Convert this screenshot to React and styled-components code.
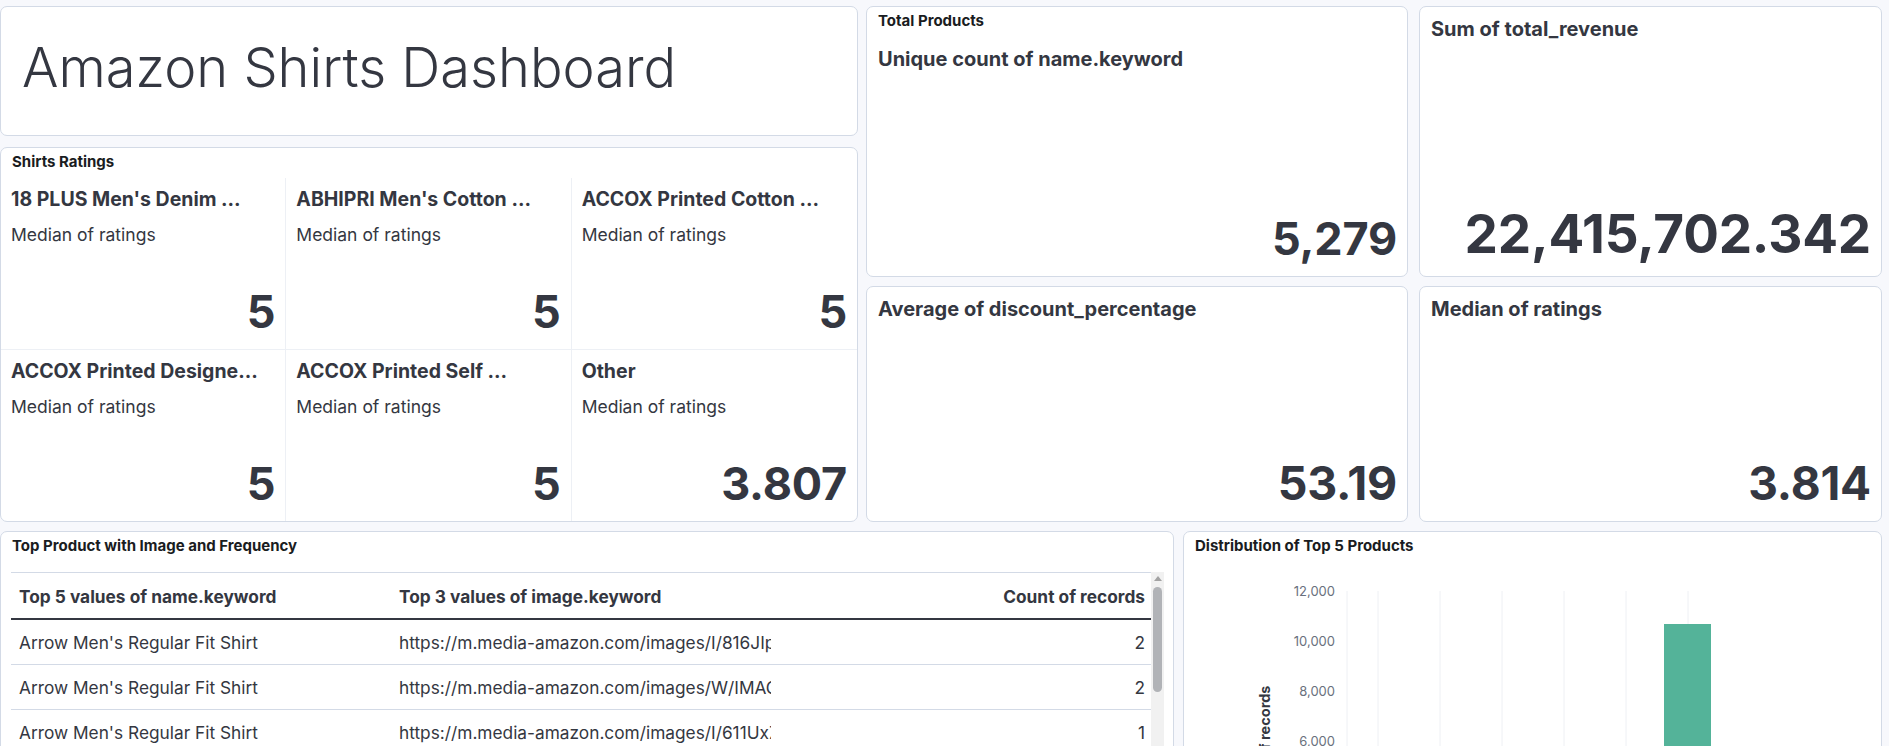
import React from "react";
import styled, { createGlobalStyle } from "styled-components";

const GlobalStyle = createGlobalStyle`
  html, body { margin: 0; padding: 0; background: #f7f8fc; overflow: hidden; }
  body { font-family: Inter, "Noto Sans", sans-serif; color: #343741; -webkit-font-smoothing: antialiased; }
  *, *::before, *::after { box-sizing: border-box; }
`;

const Page = styled.div`
  display: flex;
  flex-direction: column;
  gap: 9px;
  padding: 6px 7px 0 0;
  width: 1889px;
  height: 746px;
  overflow: hidden;
`;

const TopSection = styled.div`
  display: grid;
  grid-template-columns: 858px 1fr;
  column-gap: 8px;
`;

const LeftColumn = styled.div`
  display: flex;
  flex-direction: column;
  gap: 11px;
`;

const MetricGrid = styled.div`
  display: grid;
  grid-template-columns: 542px 463px;
  grid-template-rows: 271px 236px;
  column-gap: 11px;
  row-gap: 9px;
`;

const BottomSection = styled.div`
  display: grid;
  grid-template-columns: 1174px 699px;
  column-gap: 9px;
`;

const Panel = styled.section`
  background: #ffffff;
  border: 1px solid #d3dae6;
  border-radius: 7px;
  display: flex;
  flex-direction: column;
  overflow: hidden;
  min-width: 0;
  height: ${(p) => (p.$height ? `${p.$height}px` : "auto")};
`;

const PanelTitle = styled.h2`
  margin: 0;
  padding: 5px 11px 7px;
  font-size: 15px;
  line-height: 18px;
  font-weight: 700;
  color: #1a1c21;
  white-space: nowrap;
`;

const DashboardTitle = styled.h1`
  margin: 0;
  padding: 28px 21px 26px;
  font-size: 54.2px;
  line-height: 1.2;
  font-weight: 300;
  color: #343741;
  white-space: nowrap;
`;

const TileGrid = styled.div`
  flex: 1;
  display: grid;
  grid-template-columns: repeat(3, 1fr);
  grid-template-rows: repeat(2, 1fr);
`;

const Tile = styled.div`
  display: flex;
  flex-direction: column;
  min-width: 0;
  padding: 10px 10px 15px 10px;
  border-right: ${(p) => (p.$lastCol ? "none" : "1px solid #edf0f5")};
  border-bottom: ${(p) => (p.$lastRow ? "none" : "1px solid #edf0f5")};
`;

const MetricBody = styled.div`
  flex: 1;
  display: flex;
  flex-direction: column;
  min-height: 0;
  padding: 10px 10px 15px 11px;
`;

const MetricName = styled.div`
  font-size: ${(p) => p.$size || 19.5}px;
  line-height: 1.2;
  font-weight: 700;
  color: #343741;
  white-space: nowrap;
  overflow: hidden;
`;

const MetricSub = styled.div`
  margin-top: 13px;
  font-size: 17.5px;
  line-height: 1.2;
  font-weight: 400;
  color: #343741;
  white-space: nowrap;
`;

const MetricValue = styled.div`
  margin-top: auto;
  font-size: ${(p) => p.$size || 45}px;
  line-height: 1;
  font-weight: 700;
  color: #343741;
  text-align: right;
  white-space: nowrap;
  letter-spacing: -0.2px;
`;

const TableFrame = styled.div`
  display: flex;
  margin: 10px 9px 0 10px;
  min-height: 0;
  flex: 1;
`;

const TableScroller = styled.div`
  flex: 1;
  min-width: 0;
  border-top: 1px solid #d3dae6;
`;

const Table = styled.table`
  width: 100%;
  border-collapse: collapse;
  table-layout: fixed;
  font-size: 17.3px;
  color: #343741;
`;

const HeadCell = styled.th`
  padding: 11px ${(p) => (p.$align === "right" ? "6px" : "8px")} 9px 8px;
  height: 46px;
  font-weight: 700;
  line-height: 24px;
  text-align: ${(p) => p.$align || "left"};
  border-bottom: 2px solid #343741;
  white-space: nowrap;
  overflow: hidden;
`;

const Cell = styled.td`
  padding: 11px ${(p) => (p.$align === "right" ? "6px" : p.$clip ? "0" : "8px")} 9px 8px;
  height: 45px;
  font-weight: 400;
  line-height: 24px;
  text-align: ${(p) => p.$align || "left"};
  border-bottom: 1px solid #d3dae6;
  white-space: nowrap;
  overflow: hidden;
  text-overflow: clip;
`;

const ScrollTrack = styled.div`
  width: 13px;
  background: #f1f1f1;
  display: flex;
  flex-direction: column;
  align-items: center;
  padding-top: 4px;
  gap: 6px;
`;

const ScrollArrow = styled.div`
  width: 0;
  height: 0;
  border-left: 4px solid transparent;
  border-right: 4px solid transparent;
  border-bottom: 5px solid #a3a3a3;
`;

const ScrollThumb = styled.div`
  width: 9px;
  height: 105px;
  border-radius: 5px;
  background: #b1b3b7;
`;

const ChartArea = styled.div`
  flex: 1;
  min-height: 0;
`;

const tiles = [
  { name: "18 PLUS Men's Denim …", value: "5" },
  { name: "ABHIPRI Men's Cotton …", value: "5" },
  { name: "ACCOX Printed Cotton …", value: "5" },
  { name: "ACCOX Printed Designe…", value: "5" },
  { name: "ACCOX Printed Self …", value: "5" },
  { name: "Other", value: "3.807" },
];

const rows = [
  ["Arrow Men's Regular Fit Shirt", "https://m.media-amazon.com/images/I/816JIpQ2EfL._AC_UL320_.jpg", "2"],
  ["Arrow Men's Regular Fit Shirt", "https://m.media-amazon.com/images/W/IMAGERENDERING_521856-T1/images/I/71.jpg", "2"],
  ["Arrow Men's Regular Fit Shirt", "https://m.media-amazon.com/images/I/611UxZ3vLGL._AC_UL320_.jpg", "1"],
  ["Allen Solly Men's Slim Fit Shirt", "https://m.media-amazon.com/images/I/71kP0rY2FAL._AC_UL320_.jpg", "2"],
  ["Allen Solly Men's Slim Fit Shirt", "https://m.media-amazon.com/images/I/61bN7qYJzXL._AC_UL320_.jpg", "1"],
];

const yTicks = [12000, 10000, 8000, 6000, 4000, 2000, 0];
const gridXs = [163, 194, 256, 318, 380, 442, 504];

function BarChart() {
  const zeroY = 329;
  const perUnit = 25 / 1000;
  const barValue = 10680;
  const barTop = zeroY - barValue * perUnit;
  return (
    <svg width="697" height="380" viewBox="0 0 697 380">
      {gridXs.map((x) => (
        <line key={x} x1={x} x2={x} y1={29} y2={zeroY} stroke="#eef0f4" strokeWidth="1" />
      ))}
      {yTicks.map((t) => (
        <text
          key={t}
          x={151}
          y={zeroY - t * perUnit + 4.5}
          textAnchor="end"
          fontFamily="Inter, sans-serif"
          fontSize="13"
          fill="#69707d"
        >
          {t.toLocaleString("en-US")}
        </text>
      ))}
      <text
        x={0}
        y={0}
        transform={`translate(86 ${(29 + zeroY) / 2 + 4}) rotate(-90)`}
        textAnchor="middle"
        fontFamily="Inter, sans-serif"
        fontSize="14.5"
        fontWeight="700"
        fill="#343741"
      >
        Count of records
      </text>
      <rect x={480} y={barTop} width={47} height={zeroY - barTop} fill="#54b399" />
    </svg>
  );
}

export default function App() {
  return (
    <>
      <GlobalStyle />
      <Page>
        <TopSection>
          <LeftColumn>
            <Panel $height={130}>
              <DashboardTitle>Amazon Shirts Dashboard</DashboardTitle>
            </Panel>
            <Panel $height={375}>
              <PanelTitle>Shirts Ratings</PanelTitle>
              <TileGrid>
                {tiles.map((t, i) => (
                  <Tile key={i} $lastCol={i % 3 === 2} $lastRow={i >= 3}>
                    <MetricName>{t.name}</MetricName>
                    <MetricSub>Median of ratings</MetricSub>
                    <MetricValue>{t.value}</MetricValue>
                  </Tile>
                ))}
              </TileGrid>
            </Panel>
          </LeftColumn>
          <MetricGrid>
            <Panel>
              <PanelTitle>Total Products</PanelTitle>
              <MetricBody>
                <MetricName $size={20}>Unique count of name.keyword</MetricName>
                <MetricValue $size={45}>5,279</MetricValue>
              </MetricBody>
            </Panel>
            <Panel>
              <MetricBody>
                <MetricName $size={20}>Sum of total_revenue</MetricName>
                <MetricValue $size={53}>22,415,702.342</MetricValue>
              </MetricBody>
            </Panel>
            <Panel>
              <MetricBody>
                <MetricName $size={20}>Average of discount_percentage</MetricName>
                <MetricValue $size={46.5}>53.19</MetricValue>
              </MetricBody>
            </Panel>
            <Panel>
              <MetricBody>
                <MetricName $size={20}>Median of ratings</MetricName>
                <MetricValue $size={46}>3.814</MetricValue>
              </MetricBody>
            </Panel>
          </MetricGrid>
        </TopSection>
        <BottomSection>
          <Panel $height={420}>
            <PanelTitle>Top Product with Image and Frequency</PanelTitle>
            <TableFrame>
              <TableScroller>
                <Table>
                  <colgroup>
                    <col style={{ width: 380 }} />
                    <col style={{ width: 380 }} />
                    <col />
                  </colgroup>
                  <thead>
                    <tr>
                      <HeadCell>Top 5 values of name.keyword</HeadCell>
                      <HeadCell>Top 3 values of image.keyword</HeadCell>
                      <HeadCell $align="right">Count of records</HeadCell>
                    </tr>
                  </thead>
                  <tbody>
                    {rows.map((r, i) => (
                      <tr key={i}>
                        <Cell>{r[0]}</Cell>
                        <Cell $clip>{r[1]}</Cell>
                        <Cell $align="right">{r[2]}</Cell>
                      </tr>
                    ))}
                  </tbody>
                </Table>
              </TableScroller>
              <ScrollTrack>
                <ScrollArrow />
                <ScrollThumb />
              </ScrollTrack>
            </TableFrame>
          </Panel>
          <Panel $height={420}>
            <PanelTitle>Distribution of Top 5 Products</PanelTitle>
            <ChartArea>
              <BarChart />
            </ChartArea>
          </Panel>
        </BottomSection>
      </Page>
    </>
  );
}
